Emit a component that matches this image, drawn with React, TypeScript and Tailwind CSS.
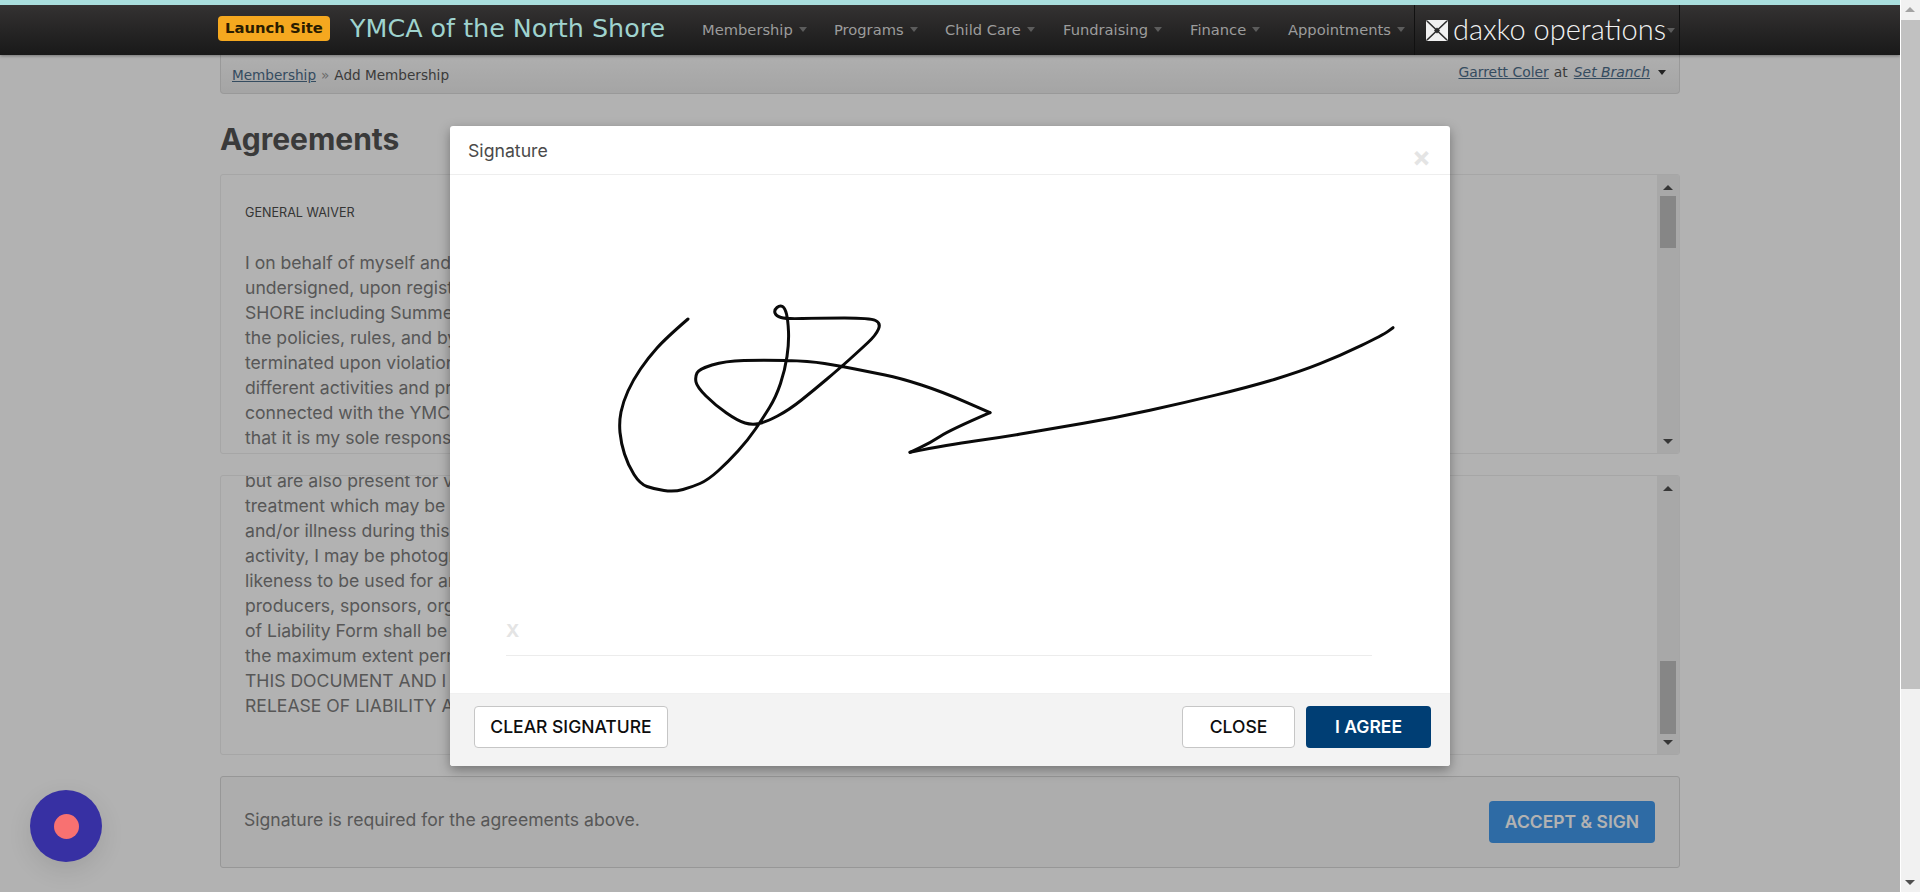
const NAV_ITEMS = [
  { label: "Membership", w: "w-[132px]" },
  { label: "Programs", w: "w-[111px]" },
  { label: "Child Care", w: "w-[118px]" },
  { label: "Fundraising", w: "w-[127px]" },
  { label: "Finance", w: "w-[98px]" },
  { label: "Appointments", w: "w-[126px]" },
];

const WAIVER_TOP = [
  "I on behalf of myself and",
  "undersigned, upon registration",
  "SHORE including Summer",
  "the policies, rules, and bylaws",
  "terminated upon violation",
  "different activities and programs",
  "connected with the YMCA",
  "that it is my sole responsibility",
];

const WAIVER_BOTTOM = [
  "but are also present for volunteers",
  "treatment which may be",
  "and/or illness during this",
  "activity, I may be photographed",
  "likeness to be used for any",
  "producers, sponsors, organizers",
  "of Liability Form shall be",
  "the maximum extent permitted",
  "THIS DOCUMENT AND I",
  "RELEASE OF LIABILITY AND",
];

// signature strokes, measured on the reference
const STROKES: number[][][] = [
  [
    [88, 29], [66, 48], [48, 68], [33, 90], [23, 112], [19, 132], [21, 153], [28, 175], [40, 194], [54, 199], [74, 202],
    [92, 197], [108, 190], [128, 172], [148, 150], [163, 128], [176, 107], [185, 80], [189, 53], [188, 30], [185, 18],
    [180, 15], [174, 20], [176, 26], [186, 29], [219, 28], [270, 28], [281, 33], [276, 45], [260, 60], [240, 78],
    [214, 100], [189, 120], [166, 132], [152, 135], [138, 131], [115, 115], [97, 97], [95, 87], [99, 79], [125, 71],
    [163, 70], [209, 71], [240, 76], [270, 82], [300, 88], [343, 102], [390, 122.7],
  ],
  [[390, 122.7], [350, 140], [330, 153], [310, 162.3]],
  [
    [310, 162.3], [350, 154.3], [400, 147.7], [450, 139], [517, 127.5], [583, 113], [650, 96.7], [700, 81.7], [740, 65.7],
    [783, 45], [793, 37.7],
  ],
];

function smoothPath(points: number[][]) {
  let d = `M${points[0][0]} ${points[0][1]}`;
  for (let i = 1; i < points.length - 1; i++) {
    const mx = (points[i][0] + points[i + 1][0]) / 2;
    const my = (points[i][1] + points[i + 1][1]) / 2;
    d += ` Q${points[i][0]} ${points[i][1]} ${mx} ${my}`;
  }
  const last = points[points.length - 1];
  return d + ` L${last[0]} ${last[1]}`;
}

function Caret({ className }: { className: string }) {
  return <span className={`inline-block w-0 h-0 border-x-[4px] border-x-transparent border-t-[5px] ${className}`} />;
}

function ArrowUp({ className }: { className: string }) {
  return <span className={`block w-0 h-0 border-x-[5px] border-x-transparent border-b-[5px] ${className}`} />;
}

function ArrowDown({ className }: { className: string }) {
  return <span className={`block w-0 h-0 border-x-[5px] border-x-transparent border-t-[5px] ${className}`} />;
}

function DaxkoMark() {
  return (
    <svg width="22" height="21" viewBox="0 0 22 21" className="shrink-0">
      <rect width="22" height="21" rx="2" fill="#f0f0f0" />
      <path d="M1 1 L21 20 M21 1 L1 20" stroke="#2c2c2c" strokeWidth="1.6" />
      <path d="M11 7.5 L14 10.5 L11 13.5 L8 10.5 Z" fill="#2c2c2c" />
    </svg>
  );
}

function NavBar() {
  return (
    <div className="relative z-30 shadow-[0_1px_3px_rgba(0,0,0,0.35)]">
      <div className="h-[5px] bg-[#a9dedd]" />
      <div className="h-[50px] bg-gradient-to-b from-[#343232] to-[#191919]">
        <div className="w-[1460px] mx-auto flex items-center h-full font-['DejaVu_Sans',sans-serif]">
          <a className="-ml-[2px] w-[112px] h-[25px] -mt-[3px] flex items-center justify-center rounded-[4px] bg-[#f5a81f] text-[#2a1c00] text-[14.8px] font-bold">
            Launch Site
          </a>
          <span className="ml-[20px] w-[352px] -mt-[3px] text-[25.4px] text-[#9fd3ce] whitespace-nowrap">YMCA of the North Shore</span>
          {NAV_ITEMS.map((item) => (
            <div key={item.label} className={`flex items-center gap-[6px] text-[14.7px] text-[#9c9c9c] whitespace-nowrap ${item.w}`}>
              <span>{item.label}</span>
              <Caret className="border-t-[#5c5c5c]" />
            </div>
          ))}
          <div className="flex-1 h-full flex items-center pl-[11px] border-x border-[#111] font-['Lato',sans-serif]">
            <DaxkoMark />
            <span className="ml-[5px] text-[29px] font-light text-[#f2f2f2] whitespace-nowrap -mt-[3px]">daxko operations</span>
            <Caret className="ml-[1px] border-t-[#5c5c5c]" />
          </div>
        </div>
      </div>
    </div>
  );
}

function Breadcrumb() {
  return (
    <div className="h-[39px] flex items-center justify-between pl-[11px] pr-[13px] border border-t-0 border-[#dcdcdc] rounded-b-[4px] bg-gradient-to-b from-[#fbfbfb] to-[#ececec] text-[13.6px] text-[#555] font-['DejaVu_Sans',sans-serif]">
      <div className="flex items-center gap-[5px] mt-[2px]">
        <a className="underline text-[#4d6d8a]">Membership</a>
        <span className="text-[#999]">»</span>
        <span>Add Membership</span>
      </div>
      <div className="flex items-center -mt-[3px] text-[13.9px]">
        <a className="underline text-[#4d6d8a]">Garrett Coler</a>
        <span className="ml-[5px]">at</span>
        <a className="ml-[6px] underline italic text-[#4d6d8a]">Set Branch</a>
        <Caret className="ml-[8px] border-t-[#333]" />
      </div>
    </div>
  );
}

function BoxScrollbar({ thumbTop, thumbHeight }: { thumbTop: string; thumbHeight: string }) {
  return (
    <div className="relative w-[22px] shrink-0 bg-[#f1f1f1] border-l border-[#f1f1f1]">
      <ArrowUp className="absolute top-[10px] left-[5px] border-b-[#505050]" />
      <div className={`absolute left-[2px] w-[16px] bg-[#c1c1c1] ${thumbTop} ${thumbHeight}`} />
      <ArrowDown className="absolute bottom-[9px] left-[5px] border-t-[#505050]" />
    </div>
  );
}

function Lines({ items }: { items: string[] }) {
  return (
    <div className="text-[17.6px] leading-[25px] text-[#7d7d7d] whitespace-nowrap">
      {items.map((line) => (
        <div key={line}>{line}</div>
      ))}
    </div>
  );
}

function Page() {
  return (
    <div className="flex-1 min-w-0 h-full overflow-hidden bg-white font-['Inter',sans-serif]">
      <NavBar />
      <div className="w-[1460px] mx-auto">
        <Breadcrumb />
        <h1 className="mt-[27px] h-[53px] text-[30px] leading-[36px] font-bold text-[#535353]">Agreements</h1>

        <div className="flex h-[280px] border border-[#eeeeee] rounded-[3px] overflow-hidden">
          <div className="flex-1 pl-[24px] pt-[30px]">
            <div className="text-[12.6px] leading-[16px] text-[#4c4c4c]">GENERAL WAIVER</div>
            <div className="mt-[29px]">
              <Lines items={WAIVER_TOP} />
            </div>
          </div>
          <BoxScrollbar thumbTop="top-[21px]" thumbHeight="h-[52px]" />
        </div>

        <div className="flex h-[280px] mt-[21px] border border-[#eeeeee] rounded-[3px] overflow-hidden">
          <div className="flex-1 pl-[24px] -mt-[8px]">
            <Lines items={WAIVER_BOTTOM} />
          </div>
          <BoxScrollbar thumbTop="top-[185px]" thumbHeight="h-[73px]" />
        </div>

        <div className="flex items-center justify-between h-[92px] mt-[21px] pl-[23px] pr-[24px] border border-[#d8d8d8] rounded-[3px] bg-[#f8f8f8]">
          <span className="text-[17.6px] -mt-[3px] text-[#7d7d7d]">Signature is required for the agreements above.</span>
          <button className="w-[166px] h-[42px] rounded-[4px] bg-[#439aed] text-white text-[17.5px] font-semibold">ACCEPT &amp; SIGN</button>
        </div>
      </div>
    </div>
  );
}

function SignatureModal() {
  return (
    <div className="absolute z-20 left-[450px] top-[126px] w-[1000px] h-[640px] flex flex-col bg-white rounded-[3px] shadow-[0_4px_12px_rgba(0,0,0,0.35)] font-['Inter',sans-serif]">
      <div className="relative h-[49px] shrink-0 border-b border-[#eeeeee] pl-[18px] pt-[12px] text-[17.7px] leading-[25px] text-[#4a4a4a]">
        Signature
        <span className="absolute right-[19px] top-[15px] text-[28px] leading-[32px] font-bold text-[#e4e4e4]">×</span>
      </div>
      <div className="relative flex-1">
        {/* signature canvas */}
        <svg className="absolute left-[150px] top-[115px]" width="800" height="220" viewBox="0 0 800 220" fill="none">
          {STROKES.map((points, i) => (
            <path key={i} d={smoothPath(points)} stroke="#0a0a0a" strokeWidth="3" strokeLinecap="round" strokeLinejoin="round" />
          ))}
        </svg>
        <div className="absolute left-[56px] right-[78px] top-[444px] h-[37px] border-b border-[#ececec] text-[18px] font-bold leading-[24px] text-[#e4e4e4]">X</div>
      </div>
      <div className="h-[73px] shrink-0 flex items-start px-[24px] pt-[12px] bg-[#f3f3f3] border-t border-[#f0f0f0] rounded-b-[3px] text-[17.5px] font-medium">
        <button className="w-[194px] h-[42px] rounded-[4px] border border-[#c6c6c6] bg-white text-[#0d0d0d]">CLEAR SIGNATURE</button>
        <button className="ml-auto w-[113px] h-[42px] rounded-[4px] border border-[#c6c6c6] bg-white text-[#0d0d0d]">CLOSE</button>
        <button className="ml-[11px] -mr-[5px] w-[125px] h-[42px] rounded-[4px] bg-[#003e74] text-white font-semibold">I AGREE</button>
      </div>
    </div>
  );
}

function PageScrollbar() {
  return (
    <div className="relative w-[20px] shrink-0 h-full bg-[#f1f1f1] border-l border-white">
      <ArrowUp className="absolute top-[7px] left-[4px] border-b-[#a3a3a3]" />
      <div className="absolute top-[20px] left-0 right-0 h-[669px] bg-[#c1c1c1]" />
      <ArrowDown className="absolute bottom-[7px] left-[4px] border-t-[#505050]" />
    </div>
  );
}

export default function App() {
  return (
    <div className="flex w-full h-[892px] overflow-hidden">
      <div className="relative flex-1 min-w-0 h-full">
        <Page />
        <div className="absolute inset-0 z-10 bg-black/30" />
        <SignatureModal />
        <div className="absolute z-20 left-[30px] top-[790px] w-[72px] h-[72px] rounded-full bg-[#3730a3] flex items-center justify-center shadow-[0_8px_24px_rgba(0,0,0,0.1)]">
          <div className="w-[25px] h-[25px] rounded-full bg-[#f87171]" />
        </div>
      </div>
      <PageScrollbar />
    </div>
  );
}
